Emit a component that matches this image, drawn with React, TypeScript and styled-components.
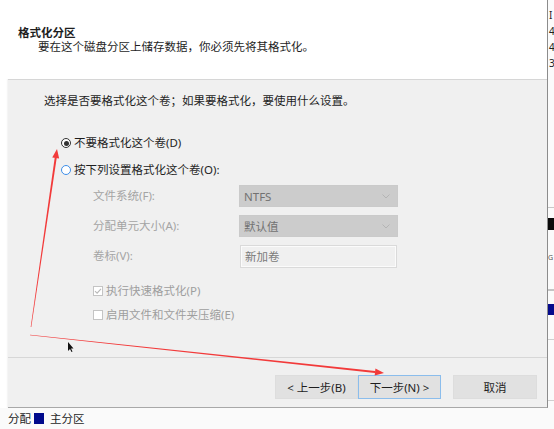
import React from "react";
import styled, { createGlobalStyle } from "styled-components";

const GlobalStyle = createGlobalStyle`
  html, body { margin: 0; padding: 0; background: #ffffff; }
  body { font-family: "Noto Sans", "Noto Sans CJK SC", sans-serif; }
`;

const Page = styled.div`
  position: relative;
  width: 554px;
  height: 429px;
  overflow: hidden;
  background: #ffffff;
  display: flex;
  flex-direction: column;
  font-size: 11.5px;
  color: #1e1e1e;
`;

const Main = styled.div`
  display: flex;
  height: 408px;
`;

const Gutter = styled.div`
  width: 8px;
  flex: none;
  background: #ffffff;
`;

const Dialog = styled.div`
  flex: 1;
  display: flex;
  flex-direction: column;
  border-right: 1px solid #8c8c8c;
  border-bottom: 1px solid #a8a8a8;
  box-shadow: 0 1px 2px rgba(0, 0, 0, 0.12);
`;

const Header = styled.div`
  height: 79px;
  flex: none;
  background: #ffffff;
  padding: 26px 0 0 18px;
  box-sizing: border-box;
  margin-left: -8px;
`;

const Title = styled.div`
  font-weight: 700;
  line-height: 14px;
`;

const Subtitle = styled.div`
  line-height: 14px;
  padding-left: 20px;
`;

const Body = styled.div`
  flex: 1;
  display: flex;
  flex-direction: column;
  background: #f0f0f0;
  border-top: 1px solid #d6d6d6;
`;

const Content = styled.div`
  flex: 1;
  display: flex;
  flex-direction: column;
  padding: 13px 0 0 36px;
`;

const Intro = styled.div`
  line-height: 16px;
`;

const RadioRow = styled.label<{ $top: number }>`
  display: flex;
  align-items: center;
  gap: 3px;
  height: 16px;
  margin-top: ${(p) => p.$top}px;
  margin-left: 17px;
  line-height: 16px;
`;

const RadioDot = styled.span<{ $checked?: boolean; $hover?: boolean }>`
  width: 10px;
  height: 10px;
  box-sizing: border-box;
  border-radius: 50%;
  border: ${(p) => (p.$hover ? "1.5px solid #3d8ee8" : "1px solid #333333")};
  background: #ffffff;
  display: flex;
  align-items: center;
  justify-content: center;
  &::after {
    content: "";
    display: ${(p) => (p.$checked ? "block" : "none")};
    width: 5px;
    height: 5px;
    border-radius: 50%;
    background: #333333;
  }
`;

const FormGrid = styled.div`
  display: grid;
  grid-template-columns: 146px 159px;
  grid-auto-rows: 22px;
  row-gap: 8px;
  margin: 7px 0 0 49px;
  align-items: center;
`;

const FieldLabel = styled.span`
  color: #a4a4a4;
  line-height: 16px;
`;

const Combo = styled.div`
  height: 22px;
  box-sizing: border-box;
  background: #cccccc;
  border: 1px solid #cacaca;
  color: #727272;
  display: flex;
  align-items: center;
  justify-content: space-between;
  padding: 0 7px 0 4px;
`;

const TextBox = styled.div`
  height: 23px;
  box-sizing: border-box;
  margin-left: 1px;
  width: 157px;
  background: #f0f0f0;
  border: 1px solid #dadada;
  box-shadow: inset 0 0 0 1px #fbfbfb;
  color: #7a7a7a;
  display: flex;
  align-items: center;
  padding: 0 4px;
`;

const CheckRow = styled.div<{ $top: number }>`
  display: flex;
  align-items: center;
  gap: 3px;
  height: 16px;
  margin: ${(p) => p.$top}px 0 0 49px;
`;

const CheckBox = styled.span`
  width: 10px;
  height: 10px;
  box-sizing: border-box;
  border: 1px solid #c4c4c4;
  background: #ffffff;
  display: flex;
  align-items: center;
  justify-content: center;
`;

const CheckLabel = styled.span`
  color: #9e9e9e;
  line-height: 16px;
`;

const Footer = styled.div`
  height: 50px;
  flex: none;
  border-top: 1px solid #d7d7d7;
  display: flex;
  justify-content: flex-end;
  align-items: flex-start;
  padding: 17px 10px 0 0;
  box-sizing: border-box;
`;

const ButtonPair = styled.div`
  display: flex;
  margin-right: 12px;
`;

const Button = styled.button<{ $default?: boolean; $w: number }>`
  width: ${(p) => p.$w}px;
  height: 24px;
  box-sizing: border-box;
  font: inherit;
  font-size: 11.5px;
  color: #1e1e1e;
  background: #e1e1e1;
  border: 1px solid ${(p) => (p.$default ? "#8bbdec" : "#dddddd")};
  padding: 0;
  display: flex;
  align-items: center;
  justify-content: center;
`;

const Side = styled.div`
  width: 6px;
  flex: none;
  display: flex;
  flex-direction: column;
  background: #fbfbfb;
  overflow: hidden;
`;

const SideDigit = styled.div<{ $small?: boolean }>`
  height: 16px;
  line-height: 16px;
  font-size: ${(p) => (p.$small ? "7px" : "10px")};
  color: ${(p) => (p.$small ? "#555555" : "#222222")};
  padding-left: ${(p) => (p.$small ? "0" : "1px")};
  white-space: nowrap;
`;

const SideRule = styled.div<{ $top: number; $h: number; $c: string }>`
  margin-top: ${(p) => p.$top}px;
  height: ${(p) => p.$h}px;
  background: ${(p) => p.$c};
  flex: none;
`;

const StatusBar = styled.div`
  height: 21px;
  flex: none;
  display: flex;
  align-items: center;
  gap: 3px;
  padding-left: 8px;
  background: #fafafa;
  line-height: 16px;
  color: #1e1e1e;
`;

const Swatch = styled.span`
  width: 10px;
  height: 11px;
  background: #000a8c;
  margin-right: 3px;
`;

const Overlay = styled.svg`
  position: absolute;
  left: 0;
  top: 0;
  pointer-events: none;
`;

const Chevron = () => (
  <svg width="8" height="5" viewBox="0 0 8 5">
    <path d="M0.5 0.5 L4 4 L7.5 0.5" fill="none" stroke="#b4b4b4" strokeWidth="1" />
  </svg>
);

// tapered red stroke ending in a filled arrow head
function arrowShape(ax: number, ay: number, bx: number, by: number, w0: number, w1: number, head: number, hw: number) {
  const dx = bx - ax;
  const dy = by - ay;
  const len = Math.hypot(dx, dy);
  const ux = dx / len;
  const uy = dy / len;
  const nx = -uy;
  const ny = ux;
  const hx = bx - ux * head;
  const hy = by - uy * head;
  const shaft = [
    [ax + nx * w0 / 2, ay + ny * w0 / 2],
    [hx + nx * w1 / 2, hy + ny * w1 / 2],
    [hx - nx * w1 / 2, hy - ny * w1 / 2],
    [ax - nx * w0 / 2, ay - ny * w0 / 2],
  ];
  const tip = [
    [bx, by],
    [hx + nx * hw, hy + ny * hw],
    [hx - nx * hw, hy - ny * hw],
  ];
  const pts = (a: number[][]) => a.map((p) => p.join(",")).join(" ");
  return { shaft: pts(shaft), tip: pts(tip) };
}

const up = arrowShape(31, 327, 57, 149, 0.6, 2, 9, 3.5);
const across = arrowShape(30, 335, 384, 373, 0.6, 2, 9, 3.5);

export default function App() {
  return (
    <>
      <GlobalStyle />
      <Page>
        <Main>
          <Gutter />
          <Dialog>
            <Header>
              <Title>格式化分区</Title>
              <Subtitle>要在这个磁盘分区上储存数据，你必须先将其格式化。</Subtitle>
            </Header>
            <Body>
              <Content>
                <Intro>选择是否要格式化这个卷；如果要格式化，要使用什么设置。</Intro>
                <RadioRow $top={26}>
                  <RadioDot $checked />
                  <span>不要格式化这个卷(D)</span>
                </RadioRow>
                <RadioRow $top={11}>
                  <RadioDot $hover />
                  <span>按下列设置格式化这个卷(O):</span>
                </RadioRow>
                <FormGrid>
                  <FieldLabel>文件系统(F):</FieldLabel>
                  <Combo>
                    <span>NTFS</span>
                    <Chevron />
                  </Combo>
                  <FieldLabel>分配单元大小(A):</FieldLabel>
                  <Combo>
                    <span>默认值</span>
                    <Chevron />
                  </Combo>
                  <FieldLabel>卷标(V):</FieldLabel>
                  <TextBox>新加卷</TextBox>
                </FormGrid>
                <CheckRow $top={16}>
                  <CheckBox>
                    <svg width="8" height="8" viewBox="0 0 8 8">
                      <path d="M1 4.2 L3.1 6.2 L7 1.8" fill="none" stroke="#b8b8b8" strokeWidth="1.1" />
                    </svg>
                  </CheckBox>
                  <CheckLabel>执行快速格式化(P)</CheckLabel>
                </CheckRow>
                <CheckRow $top={8}>
                  <CheckBox />
                  <CheckLabel>启用文件和文件夹压缩(E)</CheckLabel>
                </CheckRow>
              </Content>
              <Footer>
                <ButtonPair>
                  <Button $w={83}>&lt; 上一步(B)</Button>
                  <Button $w={83} $default>
                    下一步(N) &gt;
                  </Button>
                </ButtonPair>
                <Button $w={84}>取消</Button>
              </Footer>
            </Body>
          </Dialog>
          <Side>
            <SideDigit style={{ marginTop: 7 }}>I</SideDigit>
            <SideDigit>4</SideDigit>
            <SideDigit>4</SideDigit>
            <SideDigit>3</SideDigit>
            <SideRule $top={136} $h={1} $c="#c8c8c8" />
            <SideRule $top={10} $h={12} $c="#0a0a0a" />
            <SideDigit $small style={{ marginTop: 20 }}>G</SideDigit>
            <SideRule $top={23} $h={2} $c="#c4c4c4" />
            <SideRule $top={13} $h={11} $c="#050a8c" />
            <SideRule $top={24} $h={1} $c="#cfcfcf" />
            <SideRule $top={60} $h={1} $c="#cfcfcf" />
          </Side>
        </Main>
        <StatusBar>
          <span>分配</span>
          <Swatch />
          <span>主分区</span>
        </StatusBar>
        <Overlay width="554" height="429" viewBox="0 0 554 429">
          <polygon points={up.shaft} fill="#f23a3a" />
          <polygon points={up.tip} fill="#f23a3a" />
          <polygon points={across.shaft} fill="#f23a3a" />
          <polygon points={across.tip} fill="#f23a3a" />
          <path d="M68 342 L68 351 L70 349 L71.5 352 L72.5 351.5 L71 348.5 L73.5 348.5 Z" fill="#111" />
        </Overlay>
      </Page>
    </>
  );
}
